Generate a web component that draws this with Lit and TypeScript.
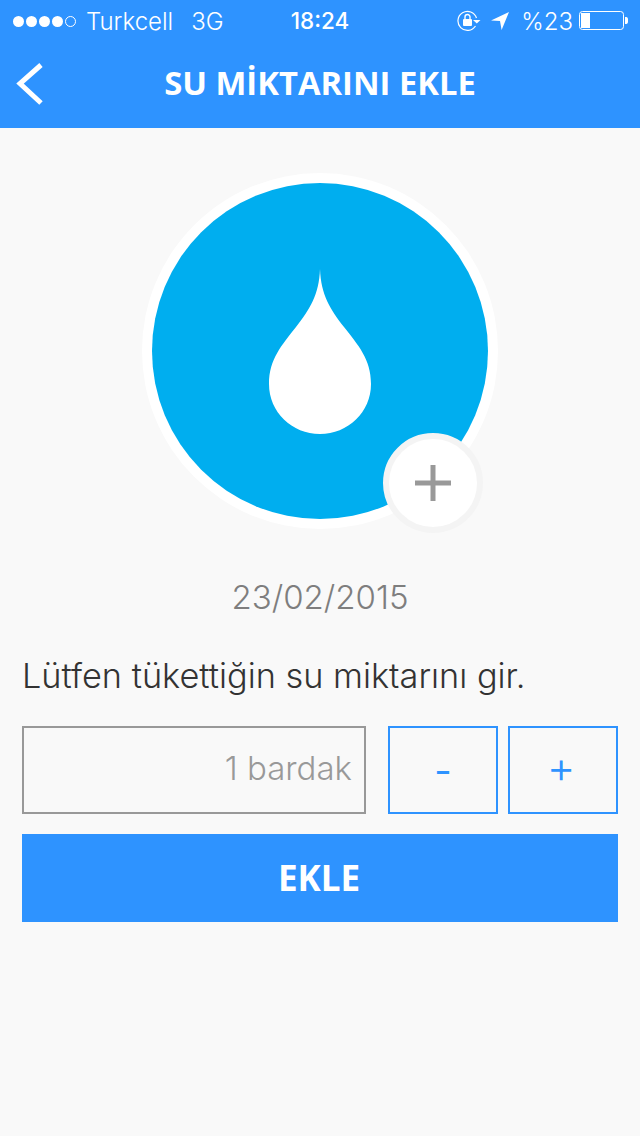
import { LitElement, html, css } from "lit";
import { customElement } from "lit/decorators.js";

@customElement("app-root")
export class AppRoot extends LitElement {
  static styles = css`
    :host { display: block; width: 640px; height: 1136px; background: #f9f9f9; font-family: "Inter", "Open Sans", sans-serif; overflow: hidden; }
    .head { background: #2e93ff; height: 128px; color: #fff; display: flex; flex-direction: column; }
    .status { height: 40px; display: flex; align-items: center; font-family: "Inter", sans-serif; font-weight: 300; font-size: 24px; padding: 2px 0 0 13px; box-sizing: border-box; position: relative; }
    .dots { display: flex; gap: 2px; margin-right: 10px; }
    .dot { width: 11px; height: 11px; border-radius: 50%; background: #fff; box-sizing: border-box; }
    .dot.off { background: none; border: 1px solid #fff; }
    .net { margin-left: 18px; }
    .time { position: absolute; left: 0; right: 0; top: 8px; text-align: center; font-weight: 500; font-size: 22.5px; line-height: 26px; }
    .right { margin-left: auto; display: flex; align-items: center; padding-right: 11px; }
    .lock { margin-right: 9px; display: block; }
    .loc { margin-right: 11px; display: block; }
    .pct { margin-right: 6px; }
    .nav { height: 88px; display: flex; align-items: center; justify-content: center; position: relative; }
    .back { position: absolute; left: 16px; top: 22px; display: block; }
    .title { font-size: 32.75px; font-weight: 700; font-family: "Open Sans", sans-serif; margin-top: -3px; }
    .main { display: flex; flex-direction: column; padding: 44.5px 22px 0; }
    .hero { align-self: center; width: 356px; height: 356px; border-radius: 50%; background: #fff; padding: 10px; box-sizing: border-box; position: relative; }
    .disc { width: 336px; height: 336px; border-radius: 50%; background: #00aeef; display: flex; align-items: center; justify-content: center; }
    .disc svg { margin-top: 2px; }
    .add { position: absolute; left: 241px; top: 260.5px; width: 100px; height: 100px; box-sizing: border-box; border-radius: 50%; border: 6px solid #f4f4f4; background: #fff; display: flex; align-items: center; justify-content: center; }
    .date { text-align: center; color: #7e7e7e; font-size: 33px; line-height: 44px; margin-top: 46.5px; font-weight: 300; }
    .prompt { color: #333; font-size: 34.3px; line-height: 44px; margin-top: 35px; font-weight: 300; }
    .row { display: flex; margin-top: 28px; gap: 10px; }
    .field { width: 344px; height: 88px; box-sizing: border-box; border: 2px solid #999; margin-right: 12px; display: flex; align-items: center; justify-content: flex-end; padding-right: 12px; padding-bottom: 4px; color: #999; font-size: 33px; font-weight: 300; }
    .step { width: 110px; height: 88px; box-sizing: border-box; border: 2px solid #2e93ff; color: #2e93ff; display: flex; align-items: center; justify-content: center; font-size: 38px; }
    .step.plus { font-size: 44px; padding: 0 4px 6px 0; font-weight: 300; }
    .ekle { margin-top: 20px; height: 88px; background: #2e93ff; color: #fff; display: flex; align-items: center; justify-content: center; font-size: 35px; font-weight: 700; font-family: "Open Sans", sans-serif; padding: 0 2px 2px 0; box-sizing: border-box; }
  `;

  render() {
    return html`
      <div class="head">
        <div class="status">
          <div class="dots">
            <span class="dot"></span><span class="dot"></span><span class="dot"></span><span class="dot"></span><span class="dot off"></span>
          </div>
          <span>Turkcell</span><span class="net">3G</span>
          <span class="time">18:24</span>
          <div class="right">
            <svg class="lock" width="24" height="22" viewBox="0 0 24 22">
              <path d="M18.500 16A9.500 9.500 0 1 1 19.500 8" fill="none" stroke="#fff" stroke-width="1.200"/>
              <path d="M16 10h7.500l-3.700 3.500z" fill="#fff"/>
              <rect x="6" y="9" width="9" height="7" rx="1" fill="#fff"/>
              <path d="M8 9V7a2.500 2.500 0 0 1 5 0v2" fill="none" stroke="#fff" stroke-width="1.400"/>
            </svg>
            <svg class="loc" width="20" height="20" viewBox="0 0 20 20"><path d="M19 1 1 9.500l9 .6 1.600 8.900z" fill="#fff"/></svg>
            <span class="pct">%23</span>
            <svg width="50" height="20" viewBox="0 0 50 20">
              <rect x=".5" y=".5" width="44" height="18" rx="3" fill="none" stroke="#fff"/>
              <rect x="2" y="2" width="9" height="15" fill="#fff"/>
              <path d="M46 6h1.500a2 2 0 0 1 1.500 2v3a2 2 0 0 1-1.500 2H46z" fill="#fff"/>
            </svg>
          </div>
        </div>
        <div class="nav">
          <svg class="back" width="30" height="44" viewBox="0 0 30 44"><path d="M25 3 4 21.500 25 41" fill="none" stroke="#fff" stroke-width="5"/></svg>
          <span class="title">SU MİKTARINI EKLE</span>
        </div>
      </div>
      <div class="main">
        <div class="hero">
          <div class="disc">
            <svg width="104" height="166" viewBox="0 0 104 166">
              <path d="M52 0C53 26 62 40 76 58C90 76 103 90 103 115C103 143 80 165 52 165C24 165 1 143 1 115C1 90 14 76 28 58C42 40 51 26 52 0Z" fill="#fff"/>
            </svg>
          </div>
          <div class="add">
            <svg width="36" height="36" viewBox="0 0 36 36"><path d="M15.500 0h5v15.500H36v5H20.500V36h-5V20.500H0v-5h15.500z" fill="#999"/></svg>
          </div>
        </div>
        <div class="date">23/02/2015</div>
        <div class="prompt">Lütfen tükettiğin su miktarını gir.</div>
        <div class="row">
          <div class="field">1 bardak</div>
          <div class="step">-</div>
          <div class="step plus">+</div>
        </div>
        <div class="ekle">EKLE</div>
      </div>
    `;
  }
}
